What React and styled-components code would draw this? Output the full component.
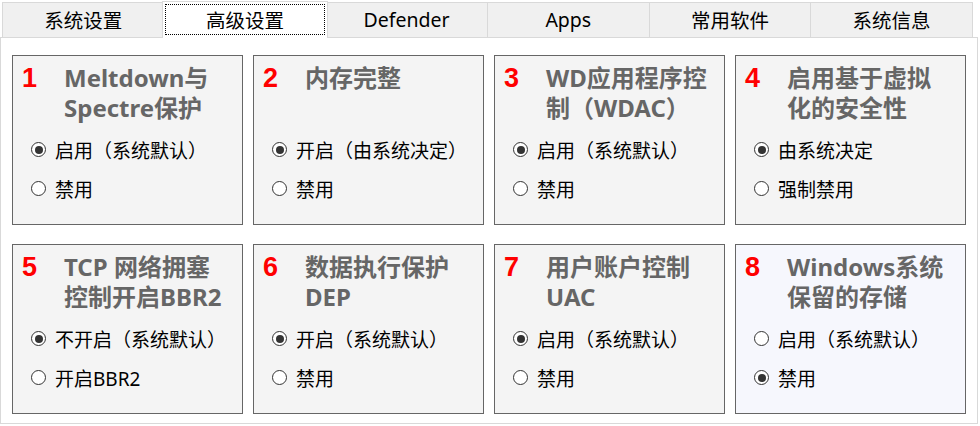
import styled, { createGlobalStyle } from 'styled-components'

const GlobalStyle = createGlobalStyle`
  body {
    margin: 0;
    background: #fff;
    font-family: "Noto Sans", "Noto Sans CJK SC", sans-serif;
    text-spacing-trim: space-all;
  }
`

const Window = styled.div`
  width: 980px;
  height: 426px;
  padding-top: 2px;
  box-sizing: border-box;
`

const TabBar = styled.div`
  display: flex;
  align-items: flex-end;
  height: 35px;
  padding-left: 3px;
`

const Tab = styled.div`
  position: relative;
  box-sizing: border-box;
  display: flex;
  width: ${p => (p.$active ? '166.67px' : '162.67px')};
  height: ${p => (p.$active ? '37px' : '35px')};
  margin: ${p => (p.$active ? '0 -2px -1px -3px' : '0 0 0 -1px')};
  padding: ${p => (p.$active ? '2px 2px 3px' : '0')};
  border: 1px solid #d9d9d9;
  border-bottom: none;
  background: ${p => (p.$active ? '#fff' : '#f0f0f0')};
  z-index: ${p => (p.$active ? 1 : 0)};
  font-size: 19.5px;
  color: #000;
`

const TabLabel = styled.div`
  flex: 1;
  display: flex;
  align-items: center;
  justify-content: center;
  padding-bottom: ${p => (p.$focus ? '0' : '2px')};
  border: 1px dotted ${p => (p.$focus ? '#000' : 'transparent')};
`

const Panel = styled.div`
  box-sizing: border-box;
  width: 978px;
  height: 387px;
  border: 1px solid #d9d9d9;
  background: #fff;
  padding: 17px 0 0 11px;
`

const Grid = styled.div`
  display: grid;
  grid-template-columns: repeat(4, 231px);
  grid-auto-rows: 170px;
  column-gap: 10px;
  row-gap: 19px;
`

const Card = styled.div`
  box-sizing: border-box;
  border: 1px solid #666;
  background: ${p => (p.$tint ? '#f6f7fd' : '#f4f4f4')};
  padding: 7px 9px 0;
`

const Head = styled.div`
  display: flex;
  align-items: baseline;
  min-height: 60px;
`

const Num = styled.div`
  width: 42px;
  flex: none;
  font-family: "Liberation Sans", Arial, sans-serif;
  font-weight: bold;
  font-size: 27px;
  line-height: 30px;
  color: #f00;
`

const Title = styled.div`
  font-size: 24px;
  font-weight: bold;
  line-height: 30px;
  color: #666;
  white-space: nowrap;
`

const Options = styled.div`
  margin-top: 7px;
  padding-left: 9px;
`

const Option = styled.div`
  display: flex;
  align-items: center;
  height: 39px;
  gap: 9px;
  font-size: 19px;
  color: #000;
`

const Dot = styled.span`
  box-sizing: border-box;
  width: 15px;
  height: 15px;
  flex: none;
  border-radius: 50%;
  border: 1px solid #333;
  background: #fff;
  display: flex;
  align-items: center;
  justify-content: center;

  &::after {
    content: '';
    width: 8px;
    height: 8px;
    border-radius: 50%;
    background: ${p => (p.$on ? '#333' : 'transparent')};
  }
`

const tabs = ['系统设置', '高级设置', 'Defender', 'Apps', '常用软件', '系统信息']

const cards = [
  { title: ['Meltdown与', 'Spectre保护'], options: ['启用（系统默认）', '禁用'], on: 0 },
  { title: ['内存完整'], options: ['开启（由系统决定）', '禁用'], on: 0 },
  { title: ['WD应用程序控', '制（WDAC）'], options: ['启用（系统默认）', '禁用'], on: 0 },
  { title: ['启用基于虚拟', '化的安全性'], options: ['由系统决定', '强制禁用'], on: 0 },
  { title: ['TCP 网络拥塞', '控制开启BBR2'], options: ['不开启（系统默认）', '开启BBR2'], on: 0 },
  { title: ['数据执行保护', 'DEP'], options: ['开启（系统默认）', '禁用'], on: 0 },
  { title: ['用户账户控制', 'UAC'], options: ['启用（系统默认）', '禁用'], on: 0 },
  { title: ['Windows系统', '保留的存储'], options: ['启用（系统默认）', '禁用'], on: 1, tint: true },
]

export default function App() {
  return (
    <Window>
      <GlobalStyle />
      <TabBar>
        {tabs.map((t, i) => (
          <Tab key={t} $active={i === 1}>
            <TabLabel $focus={i === 1}>{t}</TabLabel>
          </Tab>
        ))}
      </TabBar>
      <Panel>
        <Grid>
          {cards.map((c, i) => (
            <Card key={i} $tint={c.tint}>
              <Head>
                <Num>{i + 1}</Num>
                <Title>
                  {c.title.map(l => (
                    <div key={l}>{l}</div>
                  ))}
                </Title>
              </Head>
              <Options>
                {c.options.map((o, j) => (
                  <Option key={o}>
                    <Dot $on={j === c.on} />
                    {o}
                  </Option>
                ))}
              </Options>
            </Card>
          ))}
        </Grid>
      </Panel>
    </Window>
  )
}
